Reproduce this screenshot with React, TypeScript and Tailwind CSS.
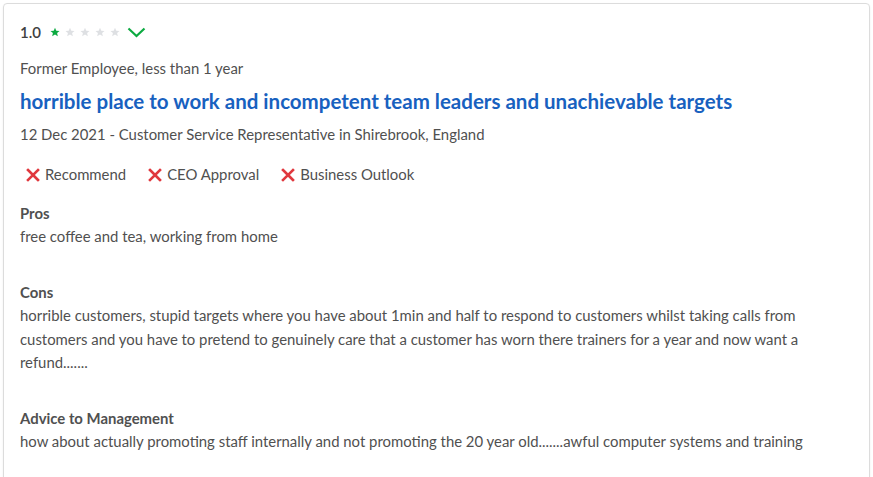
import React from 'react';

const body = "text-[14.9px] leading-[23.5px] text-[#505050]";

function Star({ filled }: { filled: boolean }) {
  return (
    <svg width="10" height="10" viewBox="0 0 24 24" className="shrink-0">
      <path
        d="M12 1.5l3.1 7.2 7.8.7-5.9 5.1 1.8 7.7L12 18.1 5.2 22.2 7 14.5 1.1 9.4l7.8-.7z"
        fill={filled ? '#0caa41' : '#dee0e3'}
      />
    </svg>
  );
}

function Cross() {
  return (
    <svg width="14" height="14" viewBox="0 0 14 14" className="shrink-0">
      <path d="M2 2L12 12M12 2L2 12" stroke="#e0383e" strokeWidth="2.6" strokeLinecap="square" />
    </svg>
  );
}

function Rating({ label }: { label: string }) {
  return (
    <div className="flex items-center">
      <Cross />
      <span className="ml-[5px]">{label}</span>
    </div>
  );
}

function Section({ title, text, className = '' }: { title: string; text: string; className?: string }) {
  return (
    <div className={className}>
      <p className={`${body} font-bold`}>{title}</p>
      <p className={body}>{text}</p>
    </div>
  );
}

export default function App() {
  return (
    <div className="bg-white h-screen overflow-hidden pt-[3px] px-[3px]" style={{ fontFamily: 'Lato, "Open Sans", sans-serif' }}>
      <div className="border border-[#dcdcdc] rounded-[4px] px-4 pt-4 pb-10 shadow-[0_1px_2px_rgba(0,0,0,0.08)]">
        <div className="flex items-center h-6">
          <span className="text-[15px] font-semibold text-[#404040] mr-[9px]">1.0</span>
          <div className="flex items-center gap-[5px]">
            <Star filled />
            <Star filled={false} />
            <Star filled={false} />
            <Star filled={false} />
            <Star filled={false} />
          </div>
          <svg width="19" height="11" viewBox="0 0 19 11" className="ml-[7px]">
            <path d="M1.5 1.5L9.5 9L17.5 1.5" stroke="#0caa41" strokeWidth="2.2" fill="none" />
          </svg>
        </div>

        <p className={`${body} mt-[13px] leading-6`}>Former Employee, less than 1 year</p>

        <h2 className="mt-[5px] text-[20.5px] leading-[30px] font-bold text-[#1861bf]">
          horrible place to work and incompetent team leaders and unachievable targets
        </h2>

        <p className={`${body} mt-[7px] leading-6`}>
          12 Dec 2021 - Customer Service Representative in Shirebrook, England
        </p>

        <div className={`${body} mt-[17px] leading-6 flex items-center gap-[22px] pl-[6px]`}>
          <Rating label="Recommend" />
          <Rating label="CEO Approval" />
          <Rating label="Business Outlook" />
        </div>

        <Section className="mt-[15px]" title="Pros" text="free coffee and tea, working from home" />
        <Section
          className="mt-8"
          title="Cons"
          text="horrible customers, stupid targets where you have about 1min and half to respond to customers whilst taking calls from customers and you have to pretend to genuinely care that a customer has worn there trainers for a year and now want a refund......."
        />
        <Section
          className="mt-8"
          title="Advice to Management"
          text="how about actually promoting staff internally and not promoting the 20 year old.......awful computer systems and training"
        />
      </div>
    </div>
  );
}
